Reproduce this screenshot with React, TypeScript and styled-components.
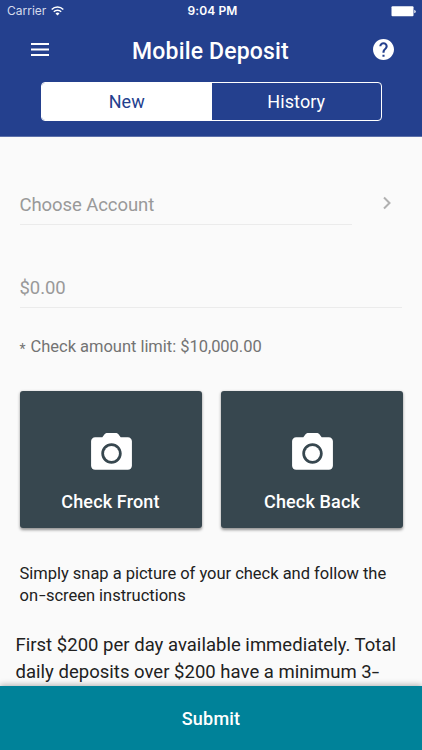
import React from "react";
import styled, { createGlobalStyle } from "styled-components";

const GlobalStyle = createGlobalStyle`
  * { box-sizing: border-box; }
  body { margin: 0; background: #fafafa; overflow: hidden; }
  button { font: inherit; border: 0; padding: 0; margin: 0; background: none; color: inherit; }
`;

const Screen = styled.div`
  display: flex;
  flex-direction: column;
  width: 422px;
  height: 750px;
  overflow: hidden;
  background: #fafafa;
  color: #212121;
  font-family: Roboto, "Liberation Sans", sans-serif;
`;

const Header = styled.header`
  flex: none;
  height: 137px;
  background: #24408e;
  border-bottom: 1px solid #5c70a9;
  color: #fff;
`;

const StatusBar = styled.div`
  display: grid;
  grid-template-columns: 1fr auto 1fr;
  align-items: center;
  height: 22px;
  padding: 0 6px 0 7px;
  font-family: Inter, sans-serif;
  font-size: 12px;
  line-height: 22px;
`;

const Carrier = styled.span`
  display: flex;
  align-items: center;
  gap: 5px;
  color: #d5dbeb;
  letter-spacing: 0;
`;

const Clock = styled.span`
  padding-left: 2px;
  font-weight: 600;
  letter-spacing: 0.1px;
`;

const BatteryIcon = styled.svg`
  justify-self: end;
`;

const TitleBar = styled.div`
  display: flex;
  align-items: center;
  justify-content: space-between;
  height: 54px;
  padding: 0 28px 0 31px;
`;

const IconButton = styled.button`
  display: flex;
`;

const Title = styled.h1`
  margin: 5px 1px 0 0;
  font-size: 23px;
  font-weight: 500;
  line-height: 28px;
  letter-spacing: 0.17px;
`;

const Segmented = styled.div`
  display: grid;
  grid-template-columns: 1fr 1fr;
  height: 39px;
  margin: 6px 40px 0 41px;
  border: 1px solid #fff;
  border-radius: 4px;
  overflow: hidden;
`;

const Segment = styled.button<{ $active?: boolean }>`
  background: ${(p) => (p.$active ? "#fff" : "transparent")};
  color: ${(p) => (p.$active ? "#24408e" : "#fff")};
  font-size: 18px;
  line-height: 37px;
  letter-spacing: 0.1px;
`;

const Content = styled.main`
  flex: 1;
  min-height: 0;
  overflow: hidden;
  padding: 48px 18px 0 19.5px;
`;

const AccountRow = styled.div`
  display: flex;
  justify-content: space-between;
  padding-right: 11px;
`;

const Field = styled.div<{ $width: number }>`
  width: ${(p) => p.$width}px;
  height: 40px;
  border-bottom: 1px solid #ebebeb;
  color: #999;
  font-size: 18.5px;
  line-height: 40px;
  letter-spacing: -0.08px;
`;

const AmountRow = styled.div`
  margin-top: 43px;
`;

const LimitNote = styled.p`
  margin: 28px 0 0;
  color: #737373;
  font-size: 16.5px;
  line-height: 22px;
  letter-spacing: -0.03px;
`;

const Asterisk = styled.span`
  display: inline-block;
  width: 7px;
  font-size: 14px;
  line-height: 14px;
  transform: translateY(1.5px);
`;

const Captures = styled.div`
  display: grid;
  grid-template-columns: 182px 182px;
  gap: 19.5px;
  margin-top: 33px;
`;

const CaptureCard = styled.button`
  display: flex;
  flex-direction: column;
  align-items: center;
  height: 136.5px;
  padding-top: 37.5px;
  border-radius: 3px;
  background: #37474f;
  box-shadow: 0 1.5px 3px rgba(0, 0, 0, 0.42);
  color: #fff;
  font-size: 18px;
  font-weight: 500;
  line-height: 24px;
  letter-spacing: 0.15px;
`;

const CameraSvg = styled.svg`
  flex: none;
  margin-left: 1px;
`;

const CaptureLabel = styled.span`
  margin-top: 12.5px;
`;

const Hint = styled.p`
  margin: 35.5px 0 0;
  font-size: 16.5px;
  line-height: 22px;
  letter-spacing: -0.02px;
  white-space: nowrap;
`;

const Hyphen = styled.span`
  display: inline-block;
  margin: 0 1.7px;
  transform: scaleX(1.45);
`;

const Terms = styled.p`
  margin: 25px -4px 0;
  font-size: 18.5px;
  line-height: 26.5px;
  letter-spacing: 0.02px;
  white-space: nowrap;
`;

const SubmitButton = styled.button`
  position: relative;
  flex: none;
  height: 64px;
  background: #008299;
  box-shadow: 0 -1px 6px rgba(0, 0, 0, 0.3);
  color: #fff;
  font-size: 18px;
  font-weight: 500;
  letter-spacing: 0.2px;
`;

const CameraIcon = () => (
  <CameraSvg width="49" height="49" viewBox="0 0 24 24" fill="#fff">
    <circle cx="12" cy="12" r="3.65" />
    <path
      fillRule="evenodd"
      d="M10 2c-.6 0-1 .2-1.4.6L7.5 4H4c-1.1 0-2 .9-2 2v12c0 1.1.9 2 2 2h16c1.1 0 2-.9 2-2V6c0-1.1-.9-2-2-2h-3.5l-1.1-1.4C15 2.2 14.6 2 14 2h-4zm2 15c-2.76 0-5-2.24-5-5s2.24-5 5-5 5 2.24 5 5-2.24 5-5 5z"
    />
  </CameraSvg>
);

const WifiIcon = () => (
  <svg width="13" height="10" viewBox="0 0 13 10" fill="none" stroke="#fff" strokeWidth="1.5">
    <path d="M.7 3.5a8.2 8.2 0 0 1 11.6 0M2.8 5.7a5.2 5.2 0 0 1 7.4 0" />
    <path d="M4.5 7.4a2.8 2.8 0 0 1 4 0L6.5 9.4z" fill="#fff" stroke="none" />
  </svg>
);

export default function App() {
  return (
    <Screen>
      <GlobalStyle />
      <Header>
        <StatusBar>
          <Carrier>
            Carrier <WifiIcon />
          </Carrier>
          <Clock>9:04 PM</Clock>
          <BatteryIcon width="25" height="11" viewBox="0 0 25 11" fill="#fff">
            <rect x=".5" y=".3" width="22" height="10" rx="1" />
            <path d="M23.3 3.7q1.4.4 1.4 1.8t-1.4 1.8z" />
          </BatteryIcon>
        </StatusBar>
        <TitleBar>
          <IconButton aria-label="Menu">
            <svg width="18" height="13" viewBox="0 0 18 13" fill="#fff">
              <path d="M0 0h18v2H0zM0 5.5h18v2H0zM0 11h18v2H0z" />
            </svg>
          </IconButton>
          <Title>Mobile Deposit</Title>
          <IconButton aria-label="Help">
            <svg width="21" height="21" viewBox="2 2 20 20" fill="#fff">
              <path d="M12 2C6.48 2 2 6.48 2 12s4.48 10 10 10 10-4.48 10-10S17.52 2 12 2zm1 17h-2v-2h2v2zm2.07-7.75-.9.92C13.45 12.9 13 13.5 13 15h-2v-.5c0-1.1.45-2.1 1.17-2.83l1.24-1.26c.37-.36.59-.86.59-1.41 0-1.1-.9-2-2-2s-2 .9-2 2H8c0-2.21 1.79-4 4-4s4 1.79 4 4c0 .88-.36 1.68-.93 2.25z" />
            </svg>
          </IconButton>
        </TitleBar>
        <Segmented>
          <Segment $active>New</Segment>
          <Segment>History</Segment>
        </Segmented>
      </Header>
      <Content>
        <AccountRow>
          <Field $width={332}>Choose Account</Field>
          <svg width="12" height="36" viewBox="0 0 12 36" fill="none" stroke="#b0b0b0" strokeWidth="2">
            <path d="m3 12.5 5.5 5.5L3 23.5" />
          </svg>
        </AccountRow>
        <AmountRow>
          <Field $width={382}>$0.00</Field>
        </AmountRow>
        <LimitNote>
          <Asterisk>*</Asterisk> Check amount limit: $10,000.00
        </LimitNote>
        <Captures>
          <CaptureCard>
            <CameraIcon />
            <CaptureLabel>Check Front</CaptureLabel>
          </CaptureCard>
          <CaptureCard>
            <CameraIcon />
            <CaptureLabel>Check Back</CaptureLabel>
          </CaptureCard>
        </Captures>
        <Hint>
          Simply snap a picture of your check and follow the
          <br />
          on<Hyphen>-</Hyphen>screen instructions
        </Hint>
        <Terms>
          First $200 per day available immediately. Total
          <br />
          daily deposits over $200 have a minimum 3<Hyphen>-</Hyphen>
        </Terms>
      </Content>
      <SubmitButton>Submit</SubmitButton>
    </Screen>
  );
}
